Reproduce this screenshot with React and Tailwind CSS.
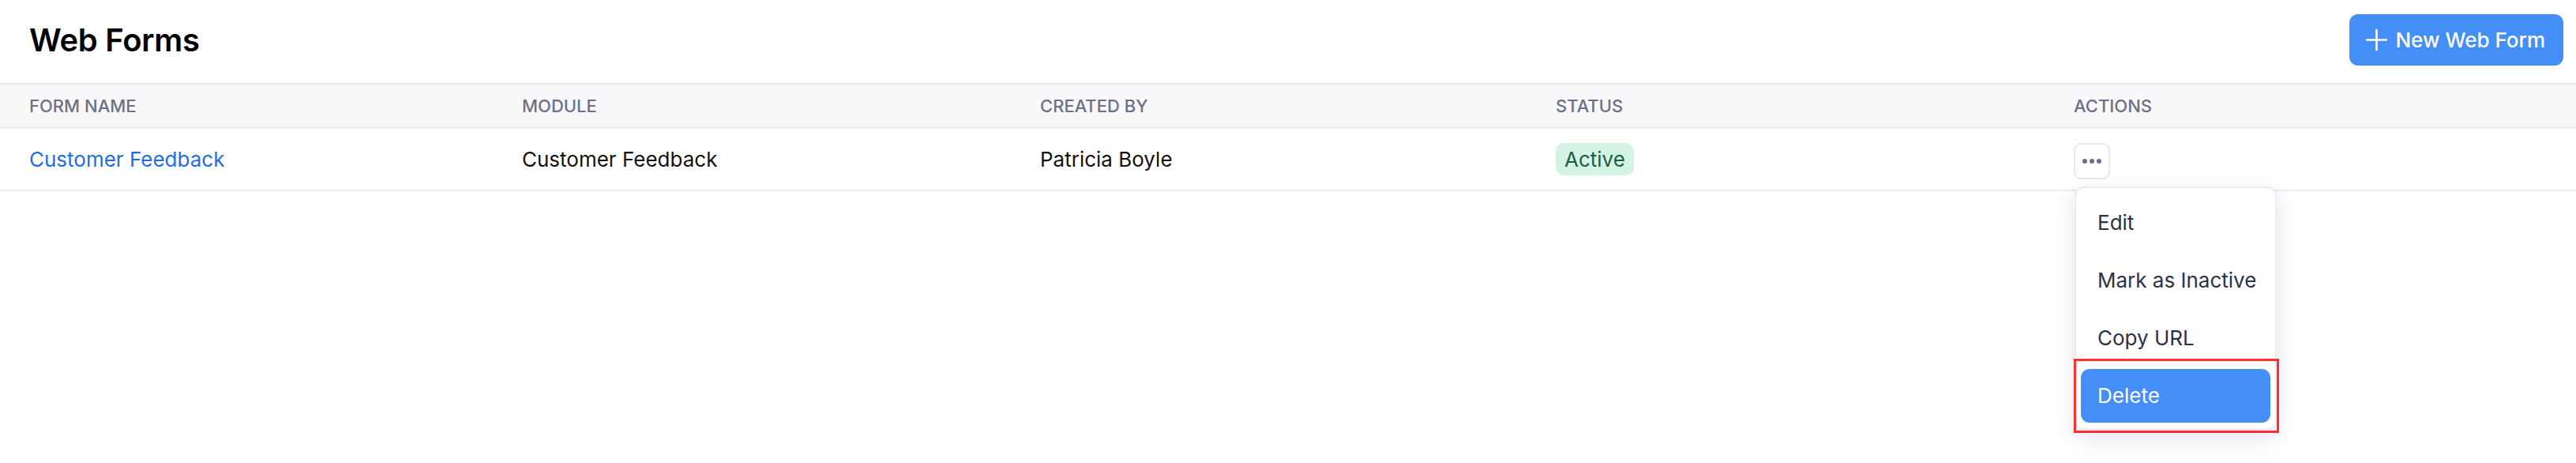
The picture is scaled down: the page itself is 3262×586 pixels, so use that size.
import React from "react";

const columns = ["Form Name", "Module", "Created By", "Status", "Actions"];

const menuItems = ["Edit", "Mark as Inactive", "Copy URL"];

function PlusIcon() {
  return (
    <svg width="27" height="27" viewBox="0 0 27 27" fill="none">
      <path d="M13.5 1v25M1 13.5h25" stroke="white" strokeWidth="2.6" strokeLinecap="round" />
    </svg>
  );
}

export default function App() {
  return (
    <div className="min-h-[586px] bg-white font-['Inter','Noto_Sans',sans-serif] text-[#111]">
      {/* Header */}
      <div className="h-[105px] flex items-center justify-between pl-[37px] pr-[16px] pb-[4px]">
        <h1 className="text-[40px] font-semibold text-black tracking-[-0.3px]">Web Forms</h1>
        <button className="h-[65px] flex items-center gap-[10px] pl-[21px] pr-[23px] rounded-[11px] bg-[#448ef8] text-white text-[26px] font-medium">
          <PlusIcon />
          New Web Form
        </button>
      </div>

      {/* Table */}
      <div className="border-t-2 border-[#ebebf2]">
        <div className="grid grid-cols-[624px_656px_653px_656px_1fr] h-[56px] bg-[#f8f8fb] items-center border-b-2 border-[#ebebf2]">
          {columns.map((c) => (
            <div key={c} className="pl-[37px] text-[22px] font-medium uppercase text-[#6b7088]">
              {c}
            </div>
          ))}
        </div>

        <div className="grid grid-cols-[624px_656px_653px_656px_1fr] h-[79px] items-center border-b-2 border-[#ebebf2] text-[26px]">
          <div className="pl-[37px] text-[#1d6ee2]">Customer Feedback</div>
          <div className="pl-[37px]">Customer Feedback</div>
          <div className="pl-[37px]">Patricia Boyle</div>
          <div className="pl-[37px]">
            <span className="inline-flex items-center h-[41px] px-[11px] rounded-[10px] bg-[#d3f3e5] text-[#1c5e3f]">
              Active
            </span>
          </div>
          <div className="pl-[37px] relative">
            <button className="w-[46px] h-[46px] mt-[4px] flex items-center justify-center gap-[3px] rounded-[9px] border-2 border-[#e8e8f1] bg-white">
              <span className="w-[6px] h-[6px] rounded-full bg-[#6b7088]" />
              <span className="w-[6px] h-[6px] rounded-full bg-[#6b7088]" />
              <span className="w-[6px] h-[6px] rounded-full bg-[#6b7088]" />
            </button>

            {/* Dropdown */}
            <div className="absolute left-[38px] top-[59px] w-[256px] z-10 bg-white border-2 border-[#ececf3] rounded-[12px] shadow-[0_10px_30px_rgba(60,60,100,0.14)] pt-[10px] pb-[7px] px-[6px] flex flex-col gap-[5px]">
              {menuItems.map((m) => (
                <div key={m} className="h-[68px] flex items-center pl-[21px] text-[26px] text-[#2c3148]">
                  {m}
                </div>
              ))}
              <div className="relative">
                <div className="h-[68px] flex items-center pl-[21px] text-[26px] text-white bg-[#448ef8] rounded-[11px]">
                  Delete
                </div>
                <div className="absolute -left-[9px] -top-[13px] -right-[11px] -bottom-[13px] border-[3px] border-[#ff2f2f] pointer-events-none" />
              </div>
            </div>
          </div>
        </div>
      </div>
    </div>
  );
}
